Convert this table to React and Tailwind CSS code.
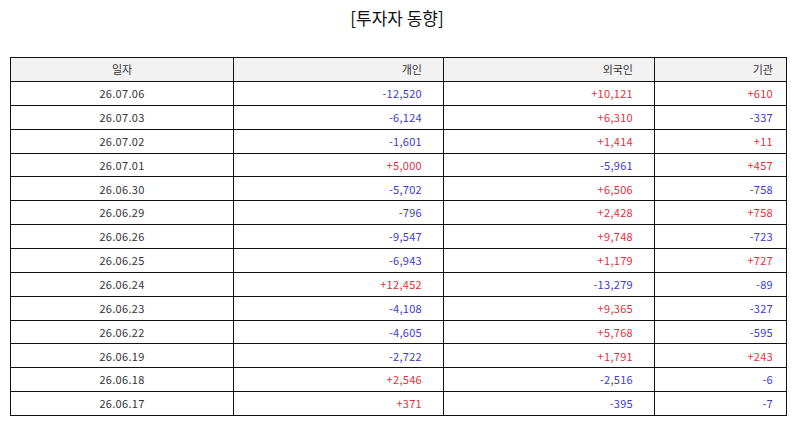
import React from "react";

const rows = [
  ["26.07.06", "-12,520", "+10,121", "+610"],
  ["26.07.03", "-6,124", "+6,310", "-337"],
  ["26.07.02", "-1,601", "+1,414", "+11"],
  ["26.07.01", "+5,000", "-5,961", "+457"],
  ["26.06.30", "-5,702", "+6,506", "-758"],
  ["26.06.29", "-796", "+2,428", "+758"],
  ["26.06.26", "-9,547", "+9,748", "-723"],
  ["26.06.25", "-6,943", "+1,179", "+727"],
  ["26.06.24", "+12,452", "-13,279", "-89"],
  ["26.06.23", "-4,108", "+9,365", "-327"],
  ["26.06.22", "-4,605", "+5,768", "-595"],
  ["26.06.19", "-2,722", "+1,791", "+243"],
  ["26.06.18", "+2,546", "-2,516", "-6"],
  ["26.06.17", "+371", "-395", "-7"],
];

function tone(v) {
  return v.startsWith("-") ? "text-[#3a3ad0]" : "text-[#e2303a]";
}

export default function App() {
  return (
    <div
      className="w-[794px] h-[425px] bg-white overflow-hidden"
      style={{ fontFamily: '"Noto Sans CJK KR", "Noto Sans", sans-serif' }}
    >
      <h1 className="text-center text-[17px] leading-[20px] text-[#111] pt-[8px] h-[57px]">
        [투자자 동향]
      </h1>

      <table className="ml-[10px] w-[776px] border-collapse table-fixed text-[11px] text-[#333]">
        <colgroup>
          <col className="w-[223px]" />
          <col className="w-[210px]" />
          <col className="w-[211px]" />
          <col className="w-[132px]" />
        </colgroup>
        <thead>
          <tr className="h-[24px] bg-[#f2f2f2]">
            <th className="border border-[#111] font-normal text-center p-0">일자</th>
            <th className="border border-[#111] font-normal text-right pr-[21px] p-0">개인</th>
            <th className="border border-[#111] font-normal text-right pr-[21px] p-0">외국인</th>
            <th className="border border-[#111] font-normal text-right pr-[13px] p-0">기관</th>
          </tr>
        </thead>
        <tbody>
          {rows.map(([d, a, b, c]) => (
            <tr key={d} className="h-[23.86px]">
              <td className="border border-[#111] text-center p-0 tracking-[0.3px]">{d}</td>
              <td className={`border border-[#111] text-right pr-[21px] p-0 tracking-[0.3px] ${tone(a)}`}>{a}</td>
              <td className={`border border-[#111] text-right pr-[21px] p-0 tracking-[0.3px] ${tone(b)}`}>{b}</td>
              <td className={`border border-[#111] text-right pr-[13px] p-0 tracking-[0.3px] ${tone(c)}`}>{c}</td>
            </tr>
          ))}
        </tbody>
      </table>
    </div>
  );
}
